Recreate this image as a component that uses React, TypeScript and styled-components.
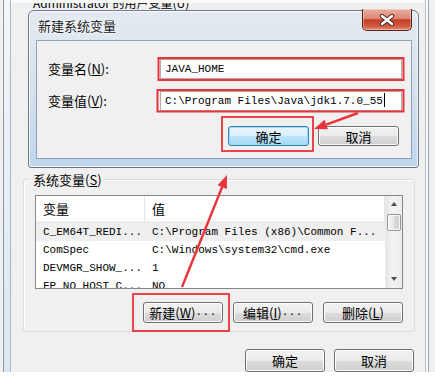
import React from 'react'
import styled, { createGlobalStyle } from 'styled-components'

const CJK = `"Noto Sans CJK SC", "Microsoft YaHei", sans-serif`
const MONO = `"Liberation Mono", "Noto Sans CJK SC", monospace`
const RED = '#e8343a'

const GlobalStyle = createGlobalStyle`
  html, body {
    margin: 0;
    padding: 0;
    background: #ffffff;
    overflow: hidden;
  }
  body {
    font-family: ${CJK};
    font-size: 13px;
    color: #000;
  }
  * { box-sizing: border-box; }
`

const Screen = styled.div`
  position: relative;
  width: 435px;
  height: 376px;
  overflow: hidden;
  background: #fff;
`

// parent "环境变量" window, mostly hidden behind the new dialog
const EnvWindow = styled.div`
  display: flex;
  height: 372px;
  background: #f0f0f0;
`

const LeftFrame = styled.div`
  width: 8px;
  margin-left: 3px;
  border-left: 1px solid #8c99a6;
  border-right: 1px solid #aab6c2;
  background: linear-gradient(#f3f6f9, #dbe6f1);
`

const RightFrame = styled.div`
  width: 4px;
  margin-right: 6px;
  border-left: 1px solid #b9bec4;
  border-right: 1px solid #9ea7b0;
  background: #f8f9fa;
`

const Content = styled.div`
  position: relative;
  flex: 1;
  display: flex;
  flex-direction: column;
`

const UserSection = styled.div`
  height: 182px;
  overflow: hidden;
  border-top: 3px solid #fafafa;
`

const UserLabel = styled.div`
  margin: -7px 0 0 22px;
  font-size: 12px;
  line-height: 14px;
`

const GroupBox = styled.div`
  position: relative;
  height: 156px;
  margin: 0 10px 0 12px;
  padding: 15px 11px 0 11px;
  border: 1px solid #d5dfe5;
  border-radius: 3px;
  box-shadow: inset 1px 1px 0 #ffffff;
  display: flex;
  flex-direction: column;
`

const GroupLabel = styled.div`
  position: absolute;
  top: -9px;
  left: 7px;
  padding: 0 2px;
  background: #f0f0f0;
  line-height: 18px;
`

const ListView = styled.div`
  height: 94px;
  border: 1px solid #828790;
  background: #fff;
  display: flex;
`

const ListBody = styled.div`
  flex: 1;
  display: flex;
  flex-direction: column;
  overflow: hidden;
`

const HeaderRow = styled.div`
  display: flex;
  flex: none;
  height: 27px;
  border-bottom: 1px solid #e3e6ea;
  background: linear-gradient(#ffffff 70%, #f6f7f9);
`

const HeaderCell = styled.div<{ $w?: number }>`
  ${(p) => (p.$w ? `width: ${p.$w}px;` : 'flex: 1;')}
  padding-left: 7px;
  line-height: 26px;
  border-right: 1px solid #e3e6ea;
`

const Row = styled.div<{ $selected?: boolean }>`
  display: flex;
  flex: none;
  height: 18px;
  background: ${(p) => (p.$selected ? '#efefef' : 'transparent')};
`

const Cell = styled.div<{ $w?: number }>`
  ${(p) => (p.$w ? `width: ${p.$w}px;` : 'flex: 1;')}
  padding-left: 7px;
  font-family: ${MONO};
  font-size: 11px;
  line-height: 18px;
  white-space: nowrap;
  overflow: hidden;
`

const ScrollBar = styled.div`
  width: 17px;
  display: flex;
  flex-direction: column;
  background: linear-gradient(to right, #e6e6e6, #f3f3f3 40%, #ececec);
  border-left: 1px solid #e9e9e9;
`

const ScrollArrow = styled.div<{ $down?: boolean }>`
  height: 17px;
  display: flex;
  align-items: center;
  justify-content: center;
  &::before {
    content: '';
    border-left: 3.5px solid transparent;
    border-right: 3.5px solid transparent;
    ${(p) => (p.$down ? 'border-top: 4px solid #4d4d4d;' : 'border-bottom: 4px solid #4d4d4d;')}
  }
`

const Thumb = styled.div`
  height: 17px;
  margin: 1px 1px 0;
  border: 1px solid #979797;
  border-radius: 2px;
  background: linear-gradient(to right, #f3f3f3, #e8e8e8 50%, #d8d8d8 51%, #d0d0d0);
  box-shadow: inset 0 0 0 1px rgba(255, 255, 255, 0.8);
`

const Track = styled.div`
  flex: 1;
`

const ButtonRow = styled.div<{ $top: number; $right?: number; $gap: number }>`
  display: flex;
  justify-content: flex-end;
  gap: ${(p) => p.$gap}px;
  margin-top: ${(p) => p.$top}px;
  padding-right: ${(p) => p.$right ?? 0}px;
`

const Button = styled.button<{ $w?: number; $h?: number; $default?: boolean }>`
  width: ${(p) => p.$w ?? 80}px;
  height: ${(p) => p.$h ?? 21}px;
  padding: 0;
  flex: none;
  font-family: ${CJK};
  font-size: 13px;
  color: #000;
  border-radius: 3px;
  border: 1px solid ${(p) => (p.$default ? '#3c7fb1' : '#707070')};
  background: ${(p) =>
    p.$default
      ? 'linear-gradient(#eaf6fd, #d9f0fc 50%, #bee6fd 51%, #a7d9f5)'
      : 'linear-gradient(#f2f2f2, #ebebeb 50%, #dddddd 51%, #cfcfcf)'};
  box-shadow: inset 0 0 0 1px ${(p) => (p.$default ? '#9fdcfa' : 'rgba(255,255,255,0.85)')};
  line-height: 1;
  display: flex;
  align-items: center;
  justify-content: center;
  white-space: nowrap;
`

const Dots = styled.span`
  font-family: ${MONO};
  font-size: 11px;
  letter-spacing: 0.5px;
`

// the overlapping "新建系统变量" dialog
const Dialog = styled.div`
  position: absolute;
  left: 17px;
  top: 10px;
  width: 391px;
  height: 158px;
  padding: 0 6px 8px 7px;
  display: flex;
  flex-direction: column;
  border: 1px solid #6b7a8a;
  border-radius: 6px 6px 3px 3px;
  background: linear-gradient(#e3eaf1 0%, #d8e2ec 45%, #bfd5ec 100%);
  box-shadow: inset 0 0 0 1px rgba(255, 255, 255, 0.75);
`

const TitleBar = styled.div`
  height: 29px;
  display: flex;
  align-items: flex-start;
  justify-content: space-between;
`

const Title = styled.div`
  padding-left: 2px;
  line-height: 30px;
  color: #1b1b1b;
  text-shadow: 0 0 6px #ffffff, 0 0 3px #ffffff;
`

const CloseButton = styled.div`
  width: 50px;
  height: 22px;
  margin-top: -2px;
  border: 1px solid #5b2119;
  border-top: none;
  border-radius: 0 0 5px 5px;
  background: linear-gradient(#eab0a2 0%, #df8672 45%, #c63d25 52%, #cf5a41 82%, #e38f78 100%);
  box-shadow: inset 0 0 0 1px rgba(255, 255, 255, 0.35);
  display: flex;
  align-items: center;
  justify-content: center;
`

const ClientArea = styled.div`
  flex: 1;
  padding: 18px 12px 0 11px;
  border: 1px solid #8ea3bb;
  background: #f0f0f0;
`

const FieldGrid = styled.div`
  display: grid;
  grid-template-columns: 112px 242px;
  row-gap: 12px;
  align-items: center;
`

const FieldLabel = styled.label`
  line-height: 20px;
`

const TextBox = styled.div`
  height: 20px;
  padding: 0 4px;
  border: 1px solid #abadb3;
  border-top-color: #a3a7b0;
  background: #fff;
  font-family: ${MONO};
  font-size: 11px;
  line-height: 18px;
  white-space: nowrap;
  overflow: hidden;
`

const Caret = styled.span`
  display: inline-block;
  width: 1px;
  height: 14px;
  margin-left: 1px;
  background: #000;
  vertical-align: -3px;
`

const Annotations = styled.svg`
  position: absolute;
  left: 0;
  top: 0;
  pointer-events: none;
`

const systemVars = [
  ['C_EM64T_REDI...', 'C:\\Program Files (x86)\\Common F...'],
  ['ComSpec', 'C:\\Windows\\system32\\cmd.exe'],
  ['DEVMGR_SHOW_...', '1'],
  ['FP_NO_HOST_C...', 'NO'],
]

const Arrow = ({ x1, y1, x2, y2 }: { x1: number; y1: number; x2: number; y2: number }) => {
  const dx = x2 - x1
  const dy = y2 - y1
  const len = Math.hypot(dx, dy)
  const ux = dx / len
  const uy = dy / len
  const bx = x2 - ux * 13
  const by = y2 - uy * 13
  const nx = -uy * 5
  const ny = ux * 5
  return (
    <g>
      <line x1={x1} y1={y1} x2={bx} y2={by} stroke={RED} strokeWidth={2.4} />
      <polygon points={`${x2},${y2} ${bx + nx},${by + ny} ${bx - nx},${by - ny}`} fill={RED} />
    </g>
  )
}

export default function App() {
  return (
    <Screen>
      <GlobalStyle />
      <EnvWindow>
        <LeftFrame />
        <Content>
          <UserSection>
            <UserLabel>Administrator 的用户变量(U)</UserLabel>
          </UserSection>

          <GroupBox>
            <GroupLabel>
              系统变量(<u>S</u>)
            </GroupLabel>
            <ListView>
              <ListBody>
                <HeaderRow>
                  <HeaderCell $w={109}>变量</HeaderCell>
                  <HeaderCell>值</HeaderCell>
                </HeaderRow>
                {systemVars.map(([name, value], i) => (
                  <Row key={name} $selected={i === 0}>
                    <Cell $w={109}>{name}</Cell>
                    <Cell>{value}</Cell>
                  </Row>
                ))}
              </ListBody>
              <ScrollBar>
                <ScrollArrow />
                <Thumb />
                <Track />
                <ScrollArrow $down />
              </ScrollBar>
            </ListView>
            <ButtonRow $top={13} $gap={10}>
              <Button>
                新建(<u>W</u>)<Dots>...</Dots>
              </Button>
              <Button>
                编辑(<u>I</u>)<Dots>...</Dots>
              </Button>
              <Button>
                删除(<u>L</u>)
              </Button>
            </ButtonRow>
          </GroupBox>

          <ButtonRow $top={17} $right={11} $gap={9}>
            <Button $h={23}>确定</Button>
            <Button $h={23}>取消</Button>
          </ButtonRow>

          <Dialog>
            <TitleBar>
              <Title>新建系统变量</Title>
              <CloseButton>
                <svg width="16" height="12" viewBox="0 0 16 12">
                  <path d="M3 2 L13 10 M13 2 L3 10" stroke="#4a2a25" strokeWidth="4.4" strokeLinecap="round" />
                  <path d="M3 2 L13 10 M13 2 L3 10" stroke="#ffffff" strokeWidth="2.4" strokeLinecap="round" />
                </svg>
              </CloseButton>
            </TitleBar>
            <ClientArea>
              <FieldGrid>
                <FieldLabel>
                  变量名(<u>N</u>):
                </FieldLabel>
                <TextBox>JAVA_HOME</TextBox>
                <FieldLabel>
                  变量值(<u>V</u>):
                </FieldLabel>
                <TextBox>
                  C:\Program Files\Java\jdk1.7.0_55
                  <Caret />
                </TextBox>
              </FieldGrid>
              <ButtonRow $top={15} $gap={9}>
                <Button $w={81} $h={20} $default>
                  确定
                </Button>
                <Button $w={81} $h={20}>
                  取消
                </Button>
              </ButtonRow>
            </ClientArea>
          </Dialog>
        </Content>
        <RightFrame />
      </EnvWindow>

      <Annotations width="435" height="376">
        <rect x="158.5" y="58" width="245" height="22" fill="none" stroke={RED} strokeWidth="2" />
        <rect x="157.5" y="90" width="246" height="21.5" fill="none" stroke={RED} strokeWidth="2" />
        <rect x="222" y="117" width="91" height="34" fill="none" stroke={RED} strokeWidth="1.8" />
        <rect x="133" y="294" width="96" height="37" fill="none" stroke={RED} strokeWidth="1.8" />
        <Arrow x1={358} y1={113} x2={314} y2={129} />
        <Arrow x1={182} y1={287} x2={227} y2={175} />
      </Annotations>
    </Screen>
  )
}
